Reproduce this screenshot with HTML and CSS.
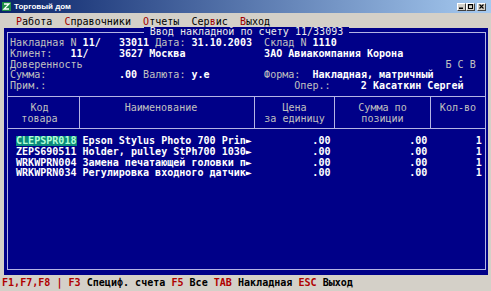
FILE: index.html
```html
<!DOCTYPE html>
<html lang="ru">

<head>
    <meta charset="UTF-8">
    <title>Торговый дом</title>
    <link rel="stylesheet" href="styles.css">
</head>

<body>
    <div class="window">
        <div class="titlebar">
            <svg class="app-icon" viewBox="0 0 9 9">
                <rect x="0" y="0" width="9" height="9" fill="#1f8f45"/>
                <path d="M2 2h5L2 7h5" fill="none" stroke="#fff" stroke-width="1.3"/>
            </svg>
            <span class="title">Торговый дом</span>
            <div class="caption-buttons">
                <span class="cap-btn">
                    <svg viewBox="0 0 5 5"><rect x="0" y="3.5" width="4" height="1.5" fill="#000"/></svg>
                </span>
                <span class="cap-btn">
                    <svg viewBox="0 0 5 5"><rect x="0.5" y="0.5" width="4" height="4" fill="none" stroke="#000" stroke-width="1"/><rect x="0" y="0" width="5" height="1.3" fill="#000"/></svg>
                </span>
                <span class="cap-btn close">
                    <svg viewBox="0 0 5 5"><path d="M0.5 0.5L4.5 4.5M4.5 0.5L0.5 4.5" stroke="#000" stroke-width="1.1"/></svg>
                </span>
            </div>
        </div>

        <div class="menubar">
            <span><span class="hot">Р</span>абота</span>
            <span><span class="hot">С</span>правочники</span>
            <span><span class="hot">О</span>тчеты</span>
            <span>Сер<span class="hot">в</span>ис</span>
            <span><span class="hot">В</span>ыход</span>
        </div>

        <div class="console">
            <div class="frame">
                <div class="frame-title">Ввод накладной по счету 11/33093</div>

                <div class="info">
                    <div class="line">Накладная N <b>11/</b>   <b>33011</b> Дата: <b>31.10.2003</b>  Склад N <b>1110</b></div>
                    <div class="line">Клиент:   <b>11/</b>     <b>3627 Москва</b>             <b>ЗАО Авиакомпания Корона</b></div>
                    <div class="line">Доверенность                                                            Б С В</div>
                    <div class="line">Сумма:            <b>.00</b> Валюта: <b>у.е</b>         Форма:  <b>Накладная, матричный</b>    <b>.</b></div>
                    <div class="line">Прим.:                                         Опер.:     <b>2 Касаткин Сергей</b></div>
                </div>

                <div class="table-head">
                    <div class="col-code">Код<br>товара</div>
                    <div class="col-name">Наименование</div>
                    <div class="col-price">Цена<br>за единицу</div>
                    <div class="col-sum">Сумма по<br>позиции</div>
                    <div class="col-qty">Кол-во</div>
                </div>

                <div class="rows">
                    <div class="row">
                        <span><span class="cur">CLEPSPR018</span></span>
                        <span>Epson Stylus Photo 700 Prin►</span>
                        <span class="num">.00</span>
                        <span class="num">.00</span>
                        <span class="num">1</span>
                    </div>
                    <div class="row">
                        <span>ZEPS690511</span>
                        <span>Holder, pulley StPh700 1030►</span>
                        <span class="num">.00</span>
                        <span class="num">.00</span>
                        <span class="num">1</span>
                    </div>
                    <div class="row">
                        <span>WRKWPRN004</span>
                        <span>Замена печатающей головки п►</span>
                        <span class="num">.00</span>
                        <span class="num">.00</span>
                        <span class="num">1</span>
                    </div>
                    <div class="row">
                        <span>WRKWPRN034</span>
                        <span>Регулировка входного датчик►</span>
                        <span class="num">.00</span>
                        <span class="num">.00</span>
                        <span class="num">1</span>
                    </div>
                </div>
            </div>
        </div>

        <div class="statusbar"><span class="key">F1,F7,F8 | F3</span> Специф. счета <span class="key">F5</span> Все <span class="key">TAB</span> Накладная <span class="key">ESC</span> Выход</div>
    </div>
</body>

</html>
```

FILE: styles.css
```css
body {
    margin: 0;
    background-color: #d4d0c8;
    font-family: "DejaVu Sans Mono", "Liberation Mono", monospace;
    font-size: 10.05px;
}

.window {
    width: 491px;
    height: 291px;
    display: flex;
    flex-direction: column;
    background-color: #d4d0c8;
    overflow: hidden;
}

/* window caption */
.titlebar {
    height: 13px;
    flex-shrink: 0;
    display: flex;
    align-items: center;
    padding-left: 2px;
    background: linear-gradient(to right, #0a246a, #a6caf0);
    font-family: "Liberation Sans", Arial, sans-serif;
    font-size: 8px;
    font-weight: bold;
    color: #fff;
}

.app-icon {
    width: 9px;
    height: 9px;
    margin-right: 3px;
}

.title {
    flex: 1;
}

.caption-buttons {
    display: flex;
    margin-right: 5px;
}

.cap-btn {
    width: 9px;
    height: 8px;
    box-sizing: border-box;
    display: flex;
    align-items: center;
    justify-content: center;
    background-color: #d4d0c8;
    border-top: 1px solid #fff;
    border-left: 1px solid #fff;
    border-right: 1px solid #404040;
    border-bottom: 1px solid #404040;
}

.cap-btn svg {
    width: 5px;
    height: 5px;
}

.cap-btn.close {
    margin-left: 2px;
}

/* menu */
.menubar {
    height: 15px;
    flex-shrink: 0;
    box-sizing: border-box;
    padding: 3px 0 0 16px;
    display: flex;
    gap: 2ch;
    line-height: 11px;
    color: #000;
}

.hot {
    color: #a00000;
}

/* text screen */
.console {
    flex: 1;
    margin: 0 3px 0 4px;
    background-color: #000088;
    display: flex;
    flex-direction: column;
}

.frame {
    flex: 1;
    margin: 4px 2px 5px 3px;
    border: 1px solid #b4b4e4;
    line-height: 10.86px;
    color: #c0c0c0;
}

.frame-title {
    width: fit-content;
    margin: -6px auto 0;
    padding: 0 1ch;
    background-color: #000088;
    color: #ececec;
}

.info {
    padding-left: 2px;
}

.info .line {
    white-space: pre;
}

.info b {
    color: #fff;
}

/* goods table */
.table-head {
    display: flex;
    margin-top: 4px;
    border-top: 1px solid #b4b4e4;
    border-bottom: 1px solid #b4b4e4;
    text-align: center;
}

.table-head div {
    box-sizing: border-box;
    padding: 6px 0 3px;
    border-right: 1px solid #b4b4e4;
}

.table-head .col-code {
    width: 72px;
    padding-right: 8px;
}

.table-head .col-name {
    width: 175px;
    padding-right: 12px;
}

.table-head .col-price {
    width: 80px;
}

.table-head .col-sum {
    width: 96px;
}

.table-head .col-qty {
    flex: 1;
    border-right: none;
}

.rows {
    margin-top: 7px;
}

.row {
    display: grid;
    grid-template-columns: 11ch 28ch 13ch 16ch 9ch;
    padding-left: 8px;
    color: #fff;
    font-weight: bold;
}

.row span {
    white-space: pre;
}

.num {
    text-align: right;
}

.cur {
    display: inline-block;
    line-height: 10px;
    background-color: #0a8a7a;
    color: #b0ffd8;
}

/* hint line */
.statusbar {
    height: 16px;
    flex-shrink: 0;
    box-sizing: border-box;
    padding: 2px 0 0 2px;
    line-height: 11px;
    font-weight: bold;
    white-space: pre;
    color: #000;
}

.key {
    color: #b00000;
}
```
